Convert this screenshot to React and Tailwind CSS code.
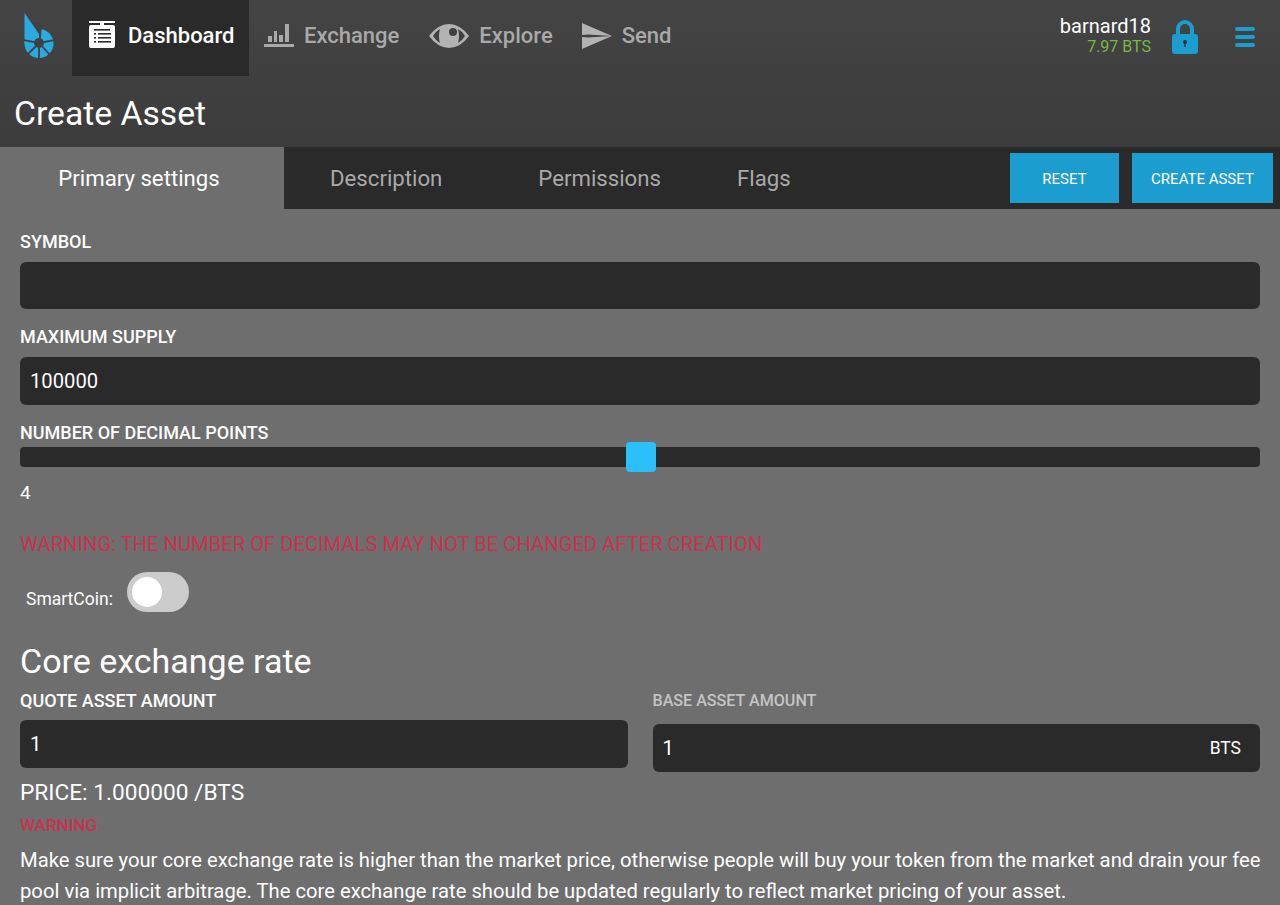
const LogoIcon = () => (
  <svg width="30" height="46" viewBox="0 0 30 46">
    <circle cx="15" cy="30.5" r="14.5" fill="#29abe2" />
    <path d="M15 30 L8 10 L18 10 L16.5 30 Z" fill="#404040" />
    <path d="M0.5 0 L15 21 L15 30 L0.5 30 Z" fill="#29abe2" />
    <g stroke="#404040" strokeWidth="1.8">
      <line x1="15" y1="30" x2="31" y2="27" />
      <line x1="15" y1="30" x2="27" y2="43" />
      <line x1="15" y1="30" x2="15" y2="47" />
      <line x1="15" y1="30" x2="3" y2="42" />
      <line x1="15" y1="30" x2="-1" y2="27" />
    </g>
    <circle cx="15" cy="30" r="5" fill="#404040" />
  </svg>
);

const DashIcon = () => (
  <svg width="28" height="28" viewBox="0 0 28 28">
    <rect x="1" y="0" width="26" height="2" fill="white" />
    <rect x="12" y="2" width="4" height="2" fill="white" />
    <path d="M3 4 H25 Q27 4 27 6 V25 Q27 27 25 27 H3 Q1 27 1 25 V6 Q1 4 3 4 Z" fill="white" />
    <g fill="#2b2b2b">
      <rect x="6" y="8" width="16" height="1.6" />
      <rect x="6" y="12" width="2" height="1.6" />
      <rect x="10" y="12" width="13" height="1.6" />
      <rect x="6" y="16" width="2" height="1.6" />
      <rect x="10" y="16" width="13" height="1.6" />
      <rect x="6" y="20" width="2" height="1.6" />
      <rect x="10" y="20" width="13" height="1.6" />
    </g>
  </svg>
);

const ExchangeIcon = () => (
  <svg width="30" height="26" viewBox="0 0 30 26" fill="#a9a9a9">
    <rect x="0" y="21" width="30" height="3" />
    <rect x="4" y="13" width="4" height="6" />
    <rect x="10" y="8" width="3" height="11" />
    <rect x="15" y="12" width="4" height="7" />
    <rect x="21" y="1" width="4" height="18" />
  </svg>
);

const EyeIcon = () => (
  <svg width="40" height="26" viewBox="0 0 40 26">
    <path d="M0 13 Q9 1 20 1 Q31 1 40 13 Q31 25 20 25 Q9 25 0 13 Z" fill="#b3b3b3" />
    <path d="M4 13 Q7 8 11 6 Q9 13 11 20 Q7 18 4 13 Z" fill="#404040" />
    <path d="M29 6 Q33 8 36 13 Q33 18 29 20 Q31 13 29 6 Z" fill="#404040" />
    <circle cx="24" cy="9" r="4" fill="#404040" />
  </svg>
);

const SendIcon = () => (
  <svg width="30" height="26" viewBox="0 0 30 26">
    <path d="M0 0 L30 13 L6 11.5 L0 12 Z" fill="#b3b3b3" />
    <path d="M0 26 L30 13 L6 14.5 L0 14 Z" fill="#b3b3b3" />
  </svg>
);

const LockIcon = () => (
  <svg width="26" height="34" viewBox="0 0 26 34">
    <path d="M6 15 V9 A7 7 0 0 1 20 9 V15" fill="none" stroke="#1b9dd0" strokeWidth="4" />
    <rect x="0" y="14" width="26" height="20" rx="3" fill="#1b9dd0" />
    <circle cx="13" cy="22" r="2" fill="#333" />
    <rect x="12.3" y="22" width="1.4" height="5" fill="#333" />
  </svg>
);

const Nav = ({ icon, label, active, className }) => (
  <div className={`flex h-[76px] items-center gap-[10px] pb-[4px] ${active ? "bg-[#2a2a2a] text-white" : "text-[#a9a9a9]"} ${className}`}>
    {icon}
    <span className="text-[22px] font-medium leading-none">{label}</span>
  </div>
);

const Field = ({ children, className }) => (
  <div className={`flex items-center rounded-md bg-[#2a2a2a] px-[10px] text-[20.2px] text-white ${className}`}>
    {children}
  </div>
);

const Label = ({ children, className }) => (
  <div className={`text-[18px] font-medium leading-[20px] text-white ${className}`}>{children}</div>
);

export default function App() {
  return (
    <div className="flex h-[905px] w-[1280px] flex-col overflow-hidden bg-[#6e6e6e] font-['Roboto',sans-serif]">
      <header className="h-[147px] shrink-0 bg-gradient-to-b from-[#444444] to-[#3c3c3c]">
        <div className="flex h-[76px]">
          <div className="flex w-[72px] items-center pb-[4px] pl-[24px]">
            <LogoIcon />
          </div>
          <Nav
            icon={<div className="-mt-[3px]"><DashIcon /></div>}
            label="Dashboard"
            active
            className="w-[177px] pl-[16px] gap-[12px]"
          />
          <Nav icon={<ExchangeIcon />} label="Exchange" className="ml-[15px]" />
          <Nav icon={<EyeIcon />} label="Explore" className="ml-[30px]" />
          <Nav icon={<SendIcon />} label="Send" className="ml-[29px]" />
          <div className="ml-auto flex items-center pb-[4px]">
            <div className="text-right">
              <div className="text-[20px] leading-[22px] text-white">barnard18</div>
              <div className="text-[16px] leading-[20px] text-[#7ab648]">7.97 BTS</div>
            </div>
            <div className="ml-[21px] pt-[2px]">
              <LockIcon />
            </div>
            <div className="ml-[37px] mr-[25px] flex w-[20px] flex-col gap-[4px] pt-[2px]">
              <div className="h-[4px] rounded-sm bg-[#1b9dd0]" />
              <div className="h-[4px] rounded-sm bg-[#1b9dd0]" />
              <div className="h-[4px] rounded-sm bg-[#1b9dd0]" />
            </div>
          </div>
        </div>
        <h1 className="pl-[14px] pt-[18px] text-[33.7px] leading-[40px] text-white">Create Asset</h1>
      </header>

      <div className="flex h-[62px] shrink-0 items-center bg-[#2a2a2a] text-[22.2px] text-[#a9a9a9]">
        <div className="flex h-full w-[284px] items-center justify-center bg-[#6e6e6e] pr-[6px] pt-[2px] text-white">Primary settings</div>
        <div className="ml-[46px] pt-[2px]">Description</div>
        <div className="ml-[96px] pt-[2px]">Permissions</div>
        <div className="ml-[76px] pt-[2px]">Flags</div>
        <div className="ml-auto mr-[7px] flex gap-[13px] pb-[1px]">
          <button className="h-[50px] w-[109px] bg-[#1b9dd0] pt-[3px] text-[15px] text-white">RESET</button>
          <button className="h-[50px] w-[141px] bg-[#1b9dd0] pt-[3px] text-[15px] text-white">CREATE ASSET</button>
        </div>
      </div>

      <main className="px-[20px]">
        <Label className="mt-[23px]">SYMBOL</Label>
        <Field className="mt-[10px] h-[47px]" />
        <Label className="mt-[18px]">MAXIMUM SUPPLY</Label>
        <Field className="mt-[10px] h-[48px]">100000</Field>
        <Label className="mt-[18px]">NUMBER OF DECIMAL POINTS</Label>
        <div className="relative mt-[4px] h-[20px] rounded bg-[#2a2a2a]">
          <div className="absolute left-[606px] top-[-5px] h-[30px] w-[30px] rounded-sm bg-[#2bc0fa]" />
        </div>
        <div className="mt-[14px] text-[19px] leading-[24px] text-white">4</div>
        <div className="mt-[27px] text-[20.2px] leading-[24px] text-[#c8324e]">
          WARNING: THE NUMBER OF DECIMALS MAY NOT BE CHANGED AFTER CREATION
        </div>
        <div className="mt-[16px] flex items-start pl-[6px]">
          <span className="mt-[14px] text-[17.5px] text-white">SmartCoin:</span>
          <div className="ml-[14px] flex h-[40px] w-[62px] items-center rounded-full bg-[#cccccc] pl-[5px]">
            <div className="h-[30px] w-[30px] rounded-full bg-white" />
          </div>
        </div>
        <h2 className="mt-[27px] text-[34px] leading-[44px] text-white">Core exchange rate</h2>
        <div className="flex gap-[25px]">
          <div className="flex-1">
            <Label className="mt-[8px]">QUOTE ASSET AMOUNT</Label>
            <Field className="mt-[9px] h-[48px]">1</Field>
          </div>
          <div className="flex-1">
            <div className="mt-[8px] text-[16.1px] font-medium leading-[20px] text-[#c4c4c4]">BASE ASSET AMOUNT</div>
            <Field className="mt-[13px] h-[48px] justify-between pr-[19px]">
              1<span className="text-[17.5px]">BTS</span>
            </Field>
          </div>
        </div>
        <div className="mt-[5px] text-[22.7px] leading-[32px] text-white">PRICE: 1.000000 /BTS</div>
        <div className="mt-[6px] text-[17px] font-medium leading-[20px] text-[#c8324e]">WARNING</div>
        <p className="-mr-[8px] mt-[10px] text-[20.24px] leading-[31px] text-white">
          Make sure your core exchange rate is higher than the market price, otherwise people will buy your token from the market and drain your fee pool via implicit arbitrage. The core exchange rate should be updated regularly to reflect market pricing of your asset.
        </p>
      </main>
    </div>
  );
}
